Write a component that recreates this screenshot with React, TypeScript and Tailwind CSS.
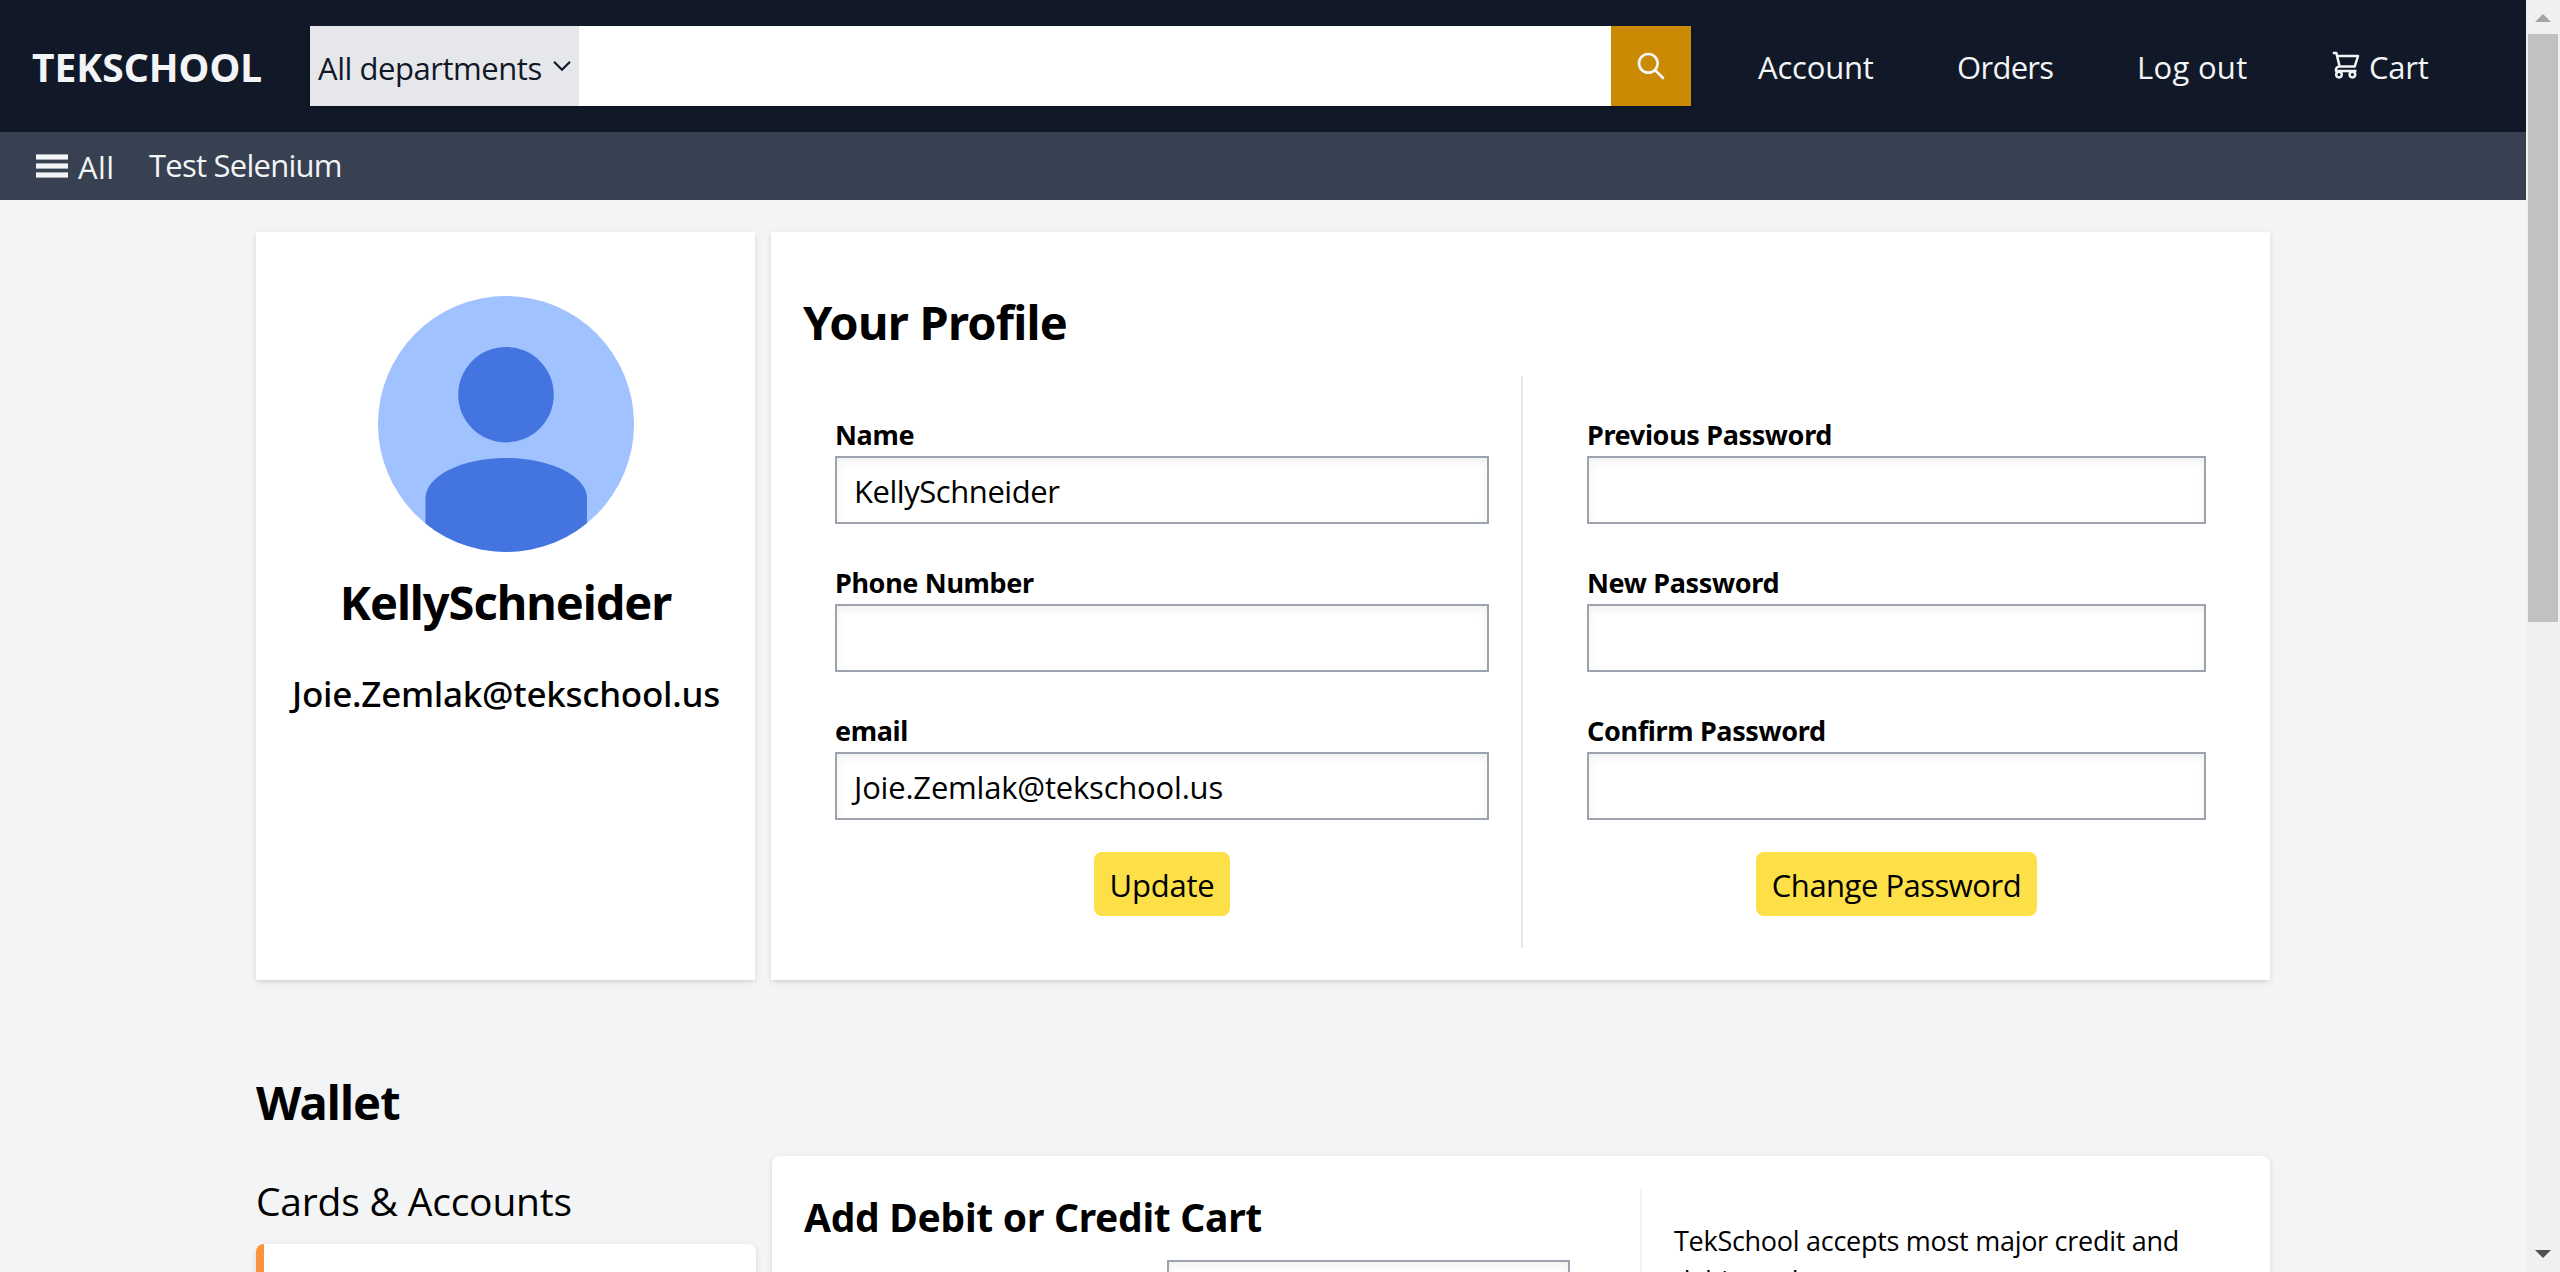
import type { ReactNode } from "react";

const cardShadow = "shadow-[0_2px_6px_0_rgba(0,0,0,0.1),0_2px_4px_-2px_rgba(0,0,0,0.1)]";
const regular = "font-['Open_Sans',sans-serif] font-normal";

function SearchIcon() {
  return (
    <svg className="size-8" viewBox="0 0 24 24" fill="none" stroke="currentColor" strokeWidth="2" strokeLinecap="round" strokeLinejoin="round">
      <path d="M21 21l-6-6m2-5a7 7 0 11-14 0 7 7 0 0114 0z" />
    </svg>
  );
}

function CartIcon() {
  return (
    <svg className="mt-[-4px] size-8" viewBox="10 10 32 32" fill="none" stroke="currentColor" strokeWidth="2.5" strokeLinejoin="round">
      <path d="M12.8 14.1H16.4L19.6 27.4H34.8L38 17H17.2" />
      <path d="M19.6 27.4C17 27.6 15.6 29.2 16 31.9H36.4" />
      <circle cx="19" cy="35.6" r="2.8" />
      <circle cx="32.4" cy="35.6" r="2.8" />
    </svg>
  );
}

function MenuIcon() {
  return (
    <svg className="h-[24px] w-8" viewBox="0 0 32 24" fill="currentColor">
      <rect x="0" y="0.4" width="32" height="5.2" />
      <rect x="0" y="9.4" width="32" height="5.2" />
      <rect x="0" y="18.4" width="32" height="5.2" />
    </svg>
  );
}

function Avatar() {
  return (
    <svg className="size-64" viewBox="0 0 256 256">
      <clipPath id="avatar-round">
        <circle cx="128" cy="128" r="128" />
      </clipPath>
      <g clipPath="url(#avatar-round)">
        <rect width="256" height="256" fill="#a0c2ff" />
        <circle cx="128" cy="98.7" r="47.8" fill="#4374e0" />
        <path d="M47.5 256V202C47.5 180 84 162 128 162S209 180 209 202V256Z" fill="#4374e0" />
      </g>
    </svg>
  );
}

function Header() {
  return (
    <header className="flex h-[132px] shrink-0 items-center bg-[#111827] text-[#f3f4f6]">
      <div className="w-[310px] shrink-0 pt-[3px] pl-8 text-[39px] font-bold">TEKSCHOOL</div>
      <div className="flex h-20 w-[1381px] shrink-0 bg-white shadow-md">
        <div className="flex w-[269px] items-center bg-[#e5e7eb] pl-2 text-[#111827]">
          <span className={`${regular} w-[225px] pt-1 text-[31px] tracking-[-0.45px] whitespace-nowrap`}>All departments</span>
          <svg className="ml-[9px] h-3 w-5" viewBox="0 0 20 12" fill="none" stroke="currentColor" strokeWidth="2.2">
            <path d="M2 1.8L10 9.8L18 1.8" />
          </svg>
        </div>
        <div className="flex-1" />
        <button className="flex w-20 items-center justify-center bg-[#ca8a04] text-[#f3f4f6]">
          <SearchIcon />
        </button>
      </div>
      <nav className={`${regular} flex items-center pt-[2px] pl-[67px] text-[31px] whitespace-nowrap`}>
        <a className="w-[199px] tracking-[-0.2px]">Account</a>
        <a className="w-[180px] tracking-[-0.7px]">Orders</a>
        <a className="w-[193px] tracking-[0.3px]">Log out</a>
        <a className="flex items-center">
          <CartIcon />
          <span className="ml-[7px] tracking-[-0.2px]">Cart</span>
        </a>
      </nav>
    </header>
  );
}

function SubNav() {
  return (
    <div className={`${regular} flex h-[68px] shrink-0 items-center bg-[#374151] pl-9 text-[31px] text-[#f3f4f6]`}>
      <MenuIcon />
      <span className="ml-[10px] w-[71px] pt-[2px] tracking-[0.4px]">All</span>
      <span className="pb-[2px] tracking-[-0.75px]">Test Selenium</span>
    </div>
  );
}

function Field({ label, value, track }: { label: string; value?: string; track?: string }) {
  return (
    <div>
      <div className="h-10 pt-px text-[27px] leading-9 font-bold tracking-[-0.35px]">{label}</div>
      <div className={`${regular} ${track ?? ""} flex h-[68px] items-center border-2 border-[#9ca3af] pt-[2px] pl-[17px] text-[31px] shadow-[inset_0_4px_8px_0_rgba(0,0,0,0.06)]`}>
        {value}
      </div>
    </div>
  );
}

function YellowButton({ children, size }: { children: ReactNode; size: string }) {
  return (
    <button className={`${regular} ${size} mt-8 flex h-16 items-center justify-center self-center rounded-lg bg-[#fde047] pt-[3px] text-[31px] whitespace-nowrap`}>
      {children}
    </button>
  );
}

function Scrollbar() {
  return (
    <div className="flex w-[34px] shrink-0 flex-col items-center bg-[#f0f0f0]">
      <svg className="mt-[14px] h-2 w-4" viewBox="0 0 16 8">
        <path d="M8 0L16 8H0Z" fill="#a3a3a3" />
      </svg>
      <div className="mt-3 h-[588px] w-[30px] bg-[#c1c1c1]" />
      <svg className="mt-auto mb-[14px] h-2 w-4" viewBox="0 0 16 8">
        <path d="M0 0H16L8 8Z" fill="#505050" />
      </svg>
    </div>
  );
}

export default function App() {
  return (
    <div className="flex h-[1272px] w-[2560px] overflow-hidden bg-[#f3f4f6] font-['Noto_Sans',sans-serif] text-black">
      <div className="flex min-w-0 flex-1 flex-col overflow-hidden">
        <Header />
        <SubNav />
        <main className="flex flex-col px-64 pt-8">
          <div className="flex gap-4">
            <section className={`${cardShadow} flex h-[748px] w-[499px] shrink-0 flex-col items-center bg-white pt-16`}>
              <Avatar />
              <h2 className="mt-[18px] text-[47px] leading-[64px] font-bold tracking-[-1.05px]">KellySchneider</h2>
              <p className="mt-[32px] pl-px text-[35px] leading-[56px] font-medium tracking-[-0.27px]">Joie.Zemlak@tekschool.us</p>
            </section>
            <section className={`${cardShadow} h-[748px] w-[1499px] shrink-0 bg-white px-8 pt-[58px]`}>
              <h1 className="h-[86px] text-[47px] leading-[64px] font-bold tracking-[-0.75px]">Your Profile</h1>
              <div className="flex">
                <div className="flex h-[572px] w-[720px] flex-col border-r-2 border-[#e5e7eb] px-8 pt-10">
                  <div className="flex flex-col gap-10">
                    <Field label="Name" value="KellySchneider" track="tracking-[-0.45px]" />
                    <Field label="Phone Number" />
                    <Field label="email" value="Joie.Zemlak@tekschool.us" track="tracking-[-0.2px]" />
                  </div>
                  <YellowButton size="w-[136px] tracking-[-0.2px]">Update</YellowButton>
                </div>
                <div className="ml-8 flex h-[572px] w-[683px] flex-col px-8 pt-10">
                  <div className="flex flex-col gap-10">
                    <Field label="Previous Password" />
                    <Field label="New Password" />
                    <Field label="Confirm Password" />
                  </div>
                  <YellowButton size="w-[281px] tracking-[-0.5px]">Change Password</YellowButton>
                </div>
              </div>
            </section>
          </div>

          <h1 className="mt-[90px] mb-[22px] text-[47px] leading-[64px] font-bold tracking-[-0.9px]">Wallet</h1>
          <div className="flex gap-4">
            <div className="flex w-[500px] shrink-0 flex-col pt-[17px]">
              <h2 className={`${regular} text-[39px] leading-[56px] tracking-[-0.2px]`}>Cards &amp; Accounts</h2>
              <div className={`${cardShadow} mt-[15px] h-64 rounded-lg border-l-8 border-[#fb923c] bg-white`} />
            </div>
            <section className={`${cardShadow} flex h-[600px] w-[1498px] shrink-0 rounded-lg bg-white px-8 pt-8`}>
              <div className="w-[838px] shrink-0 border-r-2 border-[#f3f4f6]">
                <h2 className="pt-px text-[39px] leading-[56px] font-bold tracking-[-0.28px]">Add Debit or Credit Cart</h2>
                <div className="mt-[15px] ml-[363px] h-[68px] w-[403px] border-2 border-[#9ca3af] shadow-[inset_0_4px_8px_0_rgba(0,0,0,0.06)]" />
              </div>
              <p className={`${regular} w-[563px] pt-[33px] pl-8 text-[27px] leading-10 tracking-[-0.28px]`}>
                TekSchool accepts most major credit and debit cards:
              </p>
            </section>
          </div>
        </main>
      </div>
      <Scrollbar />
    </div>
  );
}
